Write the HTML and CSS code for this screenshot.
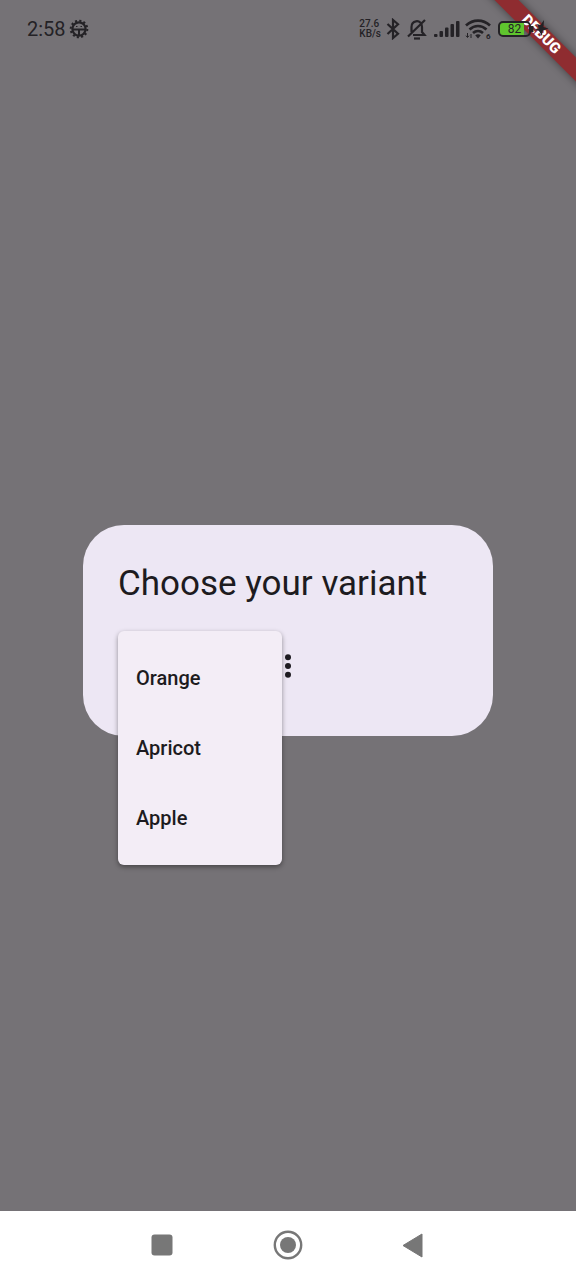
FILE: index.html
```html
<!DOCTYPE html>
<html lang="en">
<head>
<meta charset="utf-8">
<meta name="viewport" content="width=device-width, initial-scale=1">
<title>Choose your variant</title>
<link rel="stylesheet" href="styles.css">
</head>
<body>
<div class="ribbon-corner"><div class="ribbon">DEBUG</div></div>
<header class="status">
  <span class="clock">2:58</span>
  <svg class="gear" width="20" height="20" viewBox="0 0 20 20" fill="none" stroke="currentColor">
    <circle cx="10" cy="10" r="6.6" stroke-width="2.2"/>
    <circle cx="10" cy="10" r="8.3" stroke-width="2" stroke-dasharray="2.1 2.246"/>
    <path d="M4 10.6h12M10 10.6v5.4" stroke-width="2"/>
    <path d="M7 7.500h1.500M11.500 7.500h1.500" stroke-width="1"/>
  </svg>
  <div class="status-icons">
    <span class="speed">27.6<br>KB/s</span>
    <svg width="14" height="22" viewBox="0 0 14 22" fill="none" stroke="currentColor" stroke-width="2.200"><path d="M1.5 6l10.5 9.8L7 20V2l5 4.2L1.5 16"/></svg>
    <svg class="bell" width="20" height="22" viewBox="0 0 20 22" fill="none" stroke="currentColor" stroke-width="2.200"><path d="M4.500 14V9c0-3.200 2-5.300 4.500-5.700C12.500 2.700 15 5.200 15 9v5l2.500 3H6M1 18.500L18 2"/><path d="M7 20.500h6"/></svg>
    <svg class="signal" width="27" height="20" viewBox="0 0 27 20" fill="currentColor"><rect x="1" y="15" width="3.500" height="3" rx="1"/><rect x="6.500" y="12" width="3.500" height="6" rx="1"/><rect x="12" y="8.500" width="3.500" height="9.500" rx="1"/><rect x="17.500" y="5" width="3.500" height="13" rx="1"/><rect x="23" y="2" width="3.500" height="16" rx="1"/></svg>
    <svg class="wifi" width="26" height="22" viewBox="0 0 26 22" fill="none" stroke="currentColor" stroke-width="2.700"><path d="M1 7.500C8 1 18 1 25 7.500M4.500 11.500c5-4.700 12-4.700 17 0M8 15c3-2.600 7-2.600 10 0"/><path d="M10.200 17.300q2.800-2 5.600 0L13 20.500z" fill="currentColor" stroke="none"/><path d="M2.500 15v4M1 17.700l1.500 1.800L4 17.700M6 20v-4" stroke-width="1"/><text x="21" y="20.500" font-size="8" font-weight="700" fill="currentColor" stroke="none">6</text></svg>
    <div class="battery"><span>82</span></div>
    <svg class="bolt" width="19" height="18" viewBox="0 0 19 18" fill="currentColor"><path d="M0 6h2.500v6H0zM13 0l-3.500 5L6 4l2 4.500-4 .5 4 2 3 5 .5-5 6-2.500-5-1.500z"/></svg>
  </div>
</header>
<main class="screen">
  <section class="dialog" role="dialog" aria-labelledby="title">
    <h1 id="title">Choose your variant</h1>
    <div class="picker">
      <button class="more" aria-label="Show menu" aria-haspopup="menu" aria-expanded="true">
        <svg width="8" height="26" viewBox="0 0 8 26" fill="currentColor"><circle cx="4" cy="4.200" r="3"/><circle cx="4" cy="13" r="3"/><circle cx="4" cy="21.800" r="3"/></svg>
      </button>
      <div class="menu" role="menu">
        <button role="menuitem">Orange</button>
        <button role="menuitem">Apricot</button>
        <button role="menuitem">Apple</button>
      </div>
    </div>
  </section>
</main>
<nav class="navbar">
  <button aria-label="Recent apps"><svg width="30" height="30" viewBox="0 0 30 30"><rect x="4.500" y="4.500" width="21" height="21" rx="3" fill="currentColor"/></svg></button>
  <button aria-label="Home"><svg width="30" height="30" viewBox="0 0 30 30"><circle cx="15" cy="15" r="13.200" fill="none" stroke="currentColor" stroke-width="2.400"/><circle cx="15" cy="15" r="8" fill="currentColor"/></svg></button>
  <button aria-label="Back"><svg width="30" height="30" viewBox="0 0 30 30"><path d="M4 15.500L23 4v23z" fill="currentColor" stroke="currentColor" stroke-linejoin="round"/></svg></button>
</nav>
</body>
</html>
```
FILE: styles.css
```css
* { box-sizing: border-box; }
body {
  margin: 0;
  min-height: 100vh;
  display: flex;
  flex-direction: column;
  position: relative;
  background: #757276;
  color: #1d1b20;
  font-family: Roboto, sans-serif;
}
button {
  border: 0;
  padding: 0;
  background: none;
  color: inherit;
  font: inherit;
}
svg { display: block; flex: none; }

.status {
  position: relative;
  display: flex;
  align-items: center;
  height: 50px;
  padding: 8px 27px 0;
  color: #242226;
}
.clock { font-size: 20px; line-height: 24px; }
.gear { margin-left: 3px; }
.status-icons {
  display: flex;
  align-items: center;
  margin-left: auto;
}
.speed {
  margin-right: 5px;
  font-size: 10px;
  line-height: 10px;
  font-weight: 500;
}
.bell { margin-left: 7px; }
.signal { margin-left: 6px; }
.wifi { margin-left: 5px; }
.battery {
  width: 33px;
  height: 16px;
  margin-left: 7px;
  border: 2px solid #242226;
  border-radius: 5px;
  background: linear-gradient(90deg, #5fc52e 82%, transparent 82%);
  font-size: 12px;
  line-height: 13px;
  font-weight: 400;
  text-align: center;
}
.bolt { margin-right: -1px; }

.ribbon-corner {
  position: absolute;
  top: 0;
  right: 0;
  width: 100px;
  height: 100px;
  overflow: hidden;
}
.ribbon {
  position: absolute;
  top: 26px;
  right: -45px;
  width: 160px;
  transform: rotate(45deg);
  background: #8f2c30;
  box-shadow: 0 0 9px rgba(0, 0, 0, 0.45);
  color: #fff;
  font-size: 15px;
  line-height: 17px;
  font-weight: 900;
  text-align: center;
}

.screen {
  flex: 1;
  display: flex;
  align-items: center;
  justify-content: center;
}
.dialog {
  padding: 35px;
  min-width: 410px;
  border-radius: 41px;
  background: #ede7f4;
}
.dialog h1 {
  margin: 0 0 24px;
  font-size: 35px;
  line-height: 47px;
  font-weight: 400;
}
.picker {
  position: relative;
  display: flex;
  justify-content: center;
}
.more {
  display: flex;
  align-items: center;
  justify-content: center;
  width: 70px;
  height: 70px;
}
.menu {
  position: absolute;
  top: 0;
  left: 0;
  width: 164px;
  padding: 12px 0;
  border-radius: 6px;
  background: #f3edf6;
  box-shadow: 0 2px 5px rgba(0, 0, 0, 0.4);
}
.menu button {
  display: block;
  width: 100%;
  padding: 0 18px;
  font-size: 20px;
  line-height: 70px;
  font-weight: 500;
  text-align: left;
}

.navbar {
  display: flex;
  justify-content: center;
  gap: 96px;
  padding: 19px 0 20px;
  background: #fff;
  color: #777;
}
```
